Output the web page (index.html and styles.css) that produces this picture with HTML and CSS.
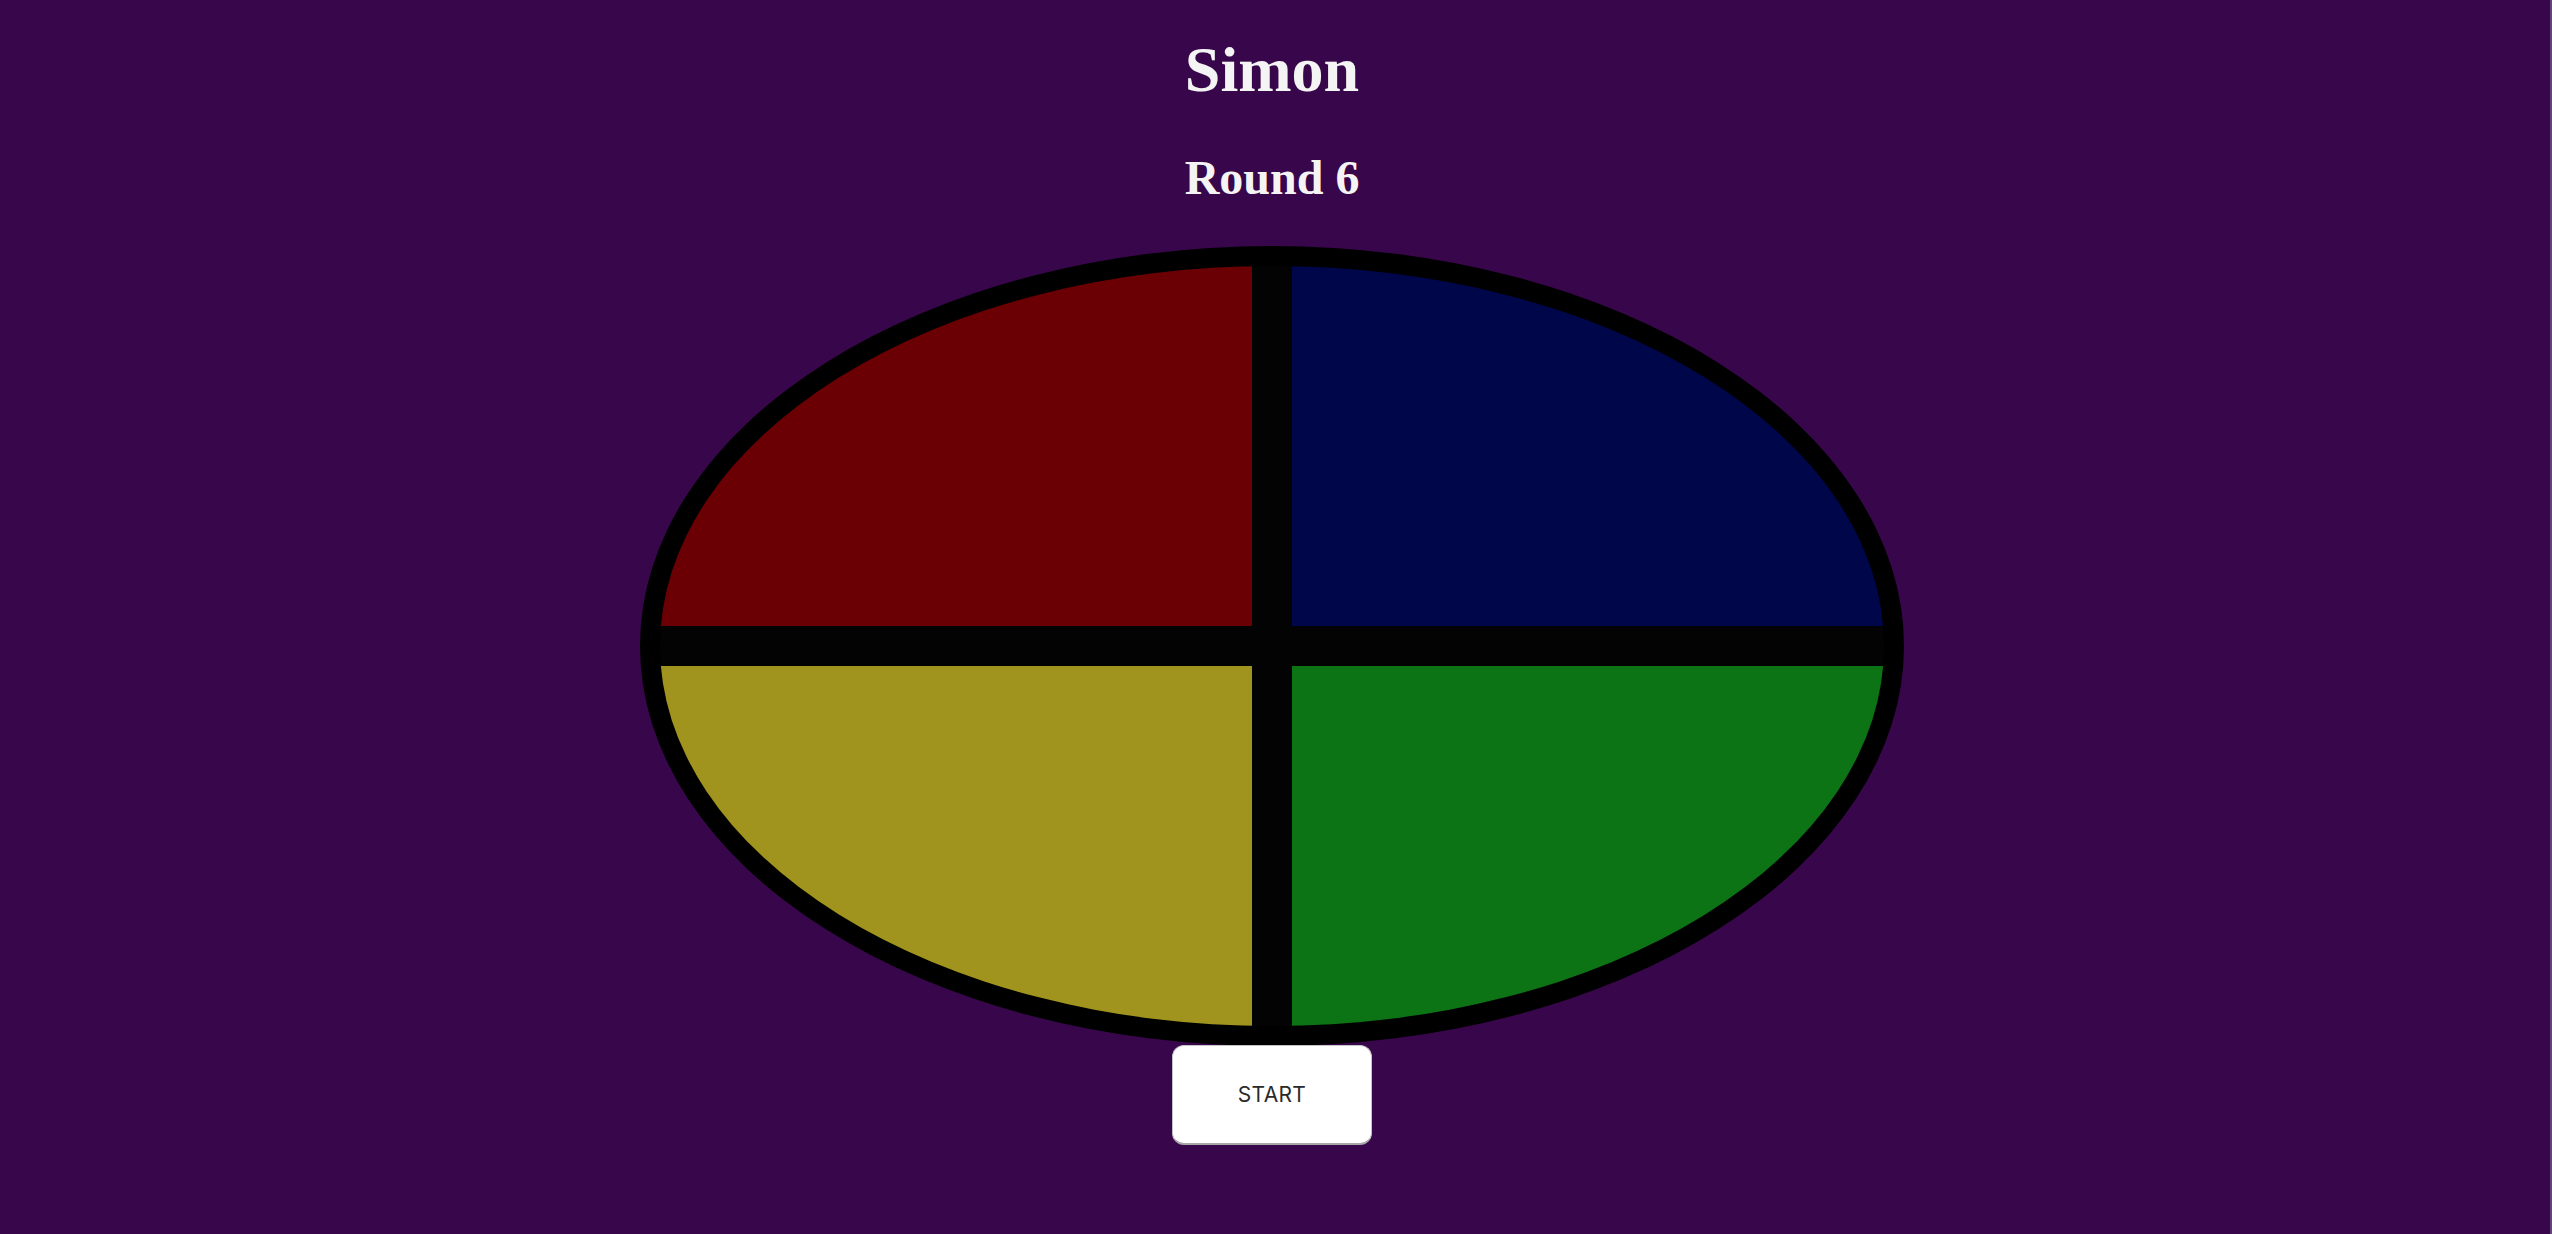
FILE: index.html
```html
<!DOCTYPE html>
<html lang="en">
<head>
<meta charset="utf-8">
<title>Simon</title>
<link rel="stylesheet" href="styles.css">
</head>
<body>
<main class="page">
  <h1 class="title">Simon</h1>
  <h2 class="round">Round 6</h2>
  <div class="board">
    <div class="pad pad-red"></div>
    <div class="pad pad-blue"></div>
    <div class="pad pad-yellow"></div>
    <div class="pad pad-green"></div>
  </div>
  <button class="start" type="button">START</button>
</main>
</body>
</html>
```

FILE: styles.css
```css
html, body {
  margin: 0;
  padding: 0;
  height: 100%;
  overflow: hidden;
}

body {
  background: #38064a;
  box-sizing: border-box;
  border-right: 2px solid #5f4579;
  padding-right: 6px;
}

.page {
  display: flex;
  flex-direction: column;
  align-items: center;
  padding-top: 33px;
  font-family: "Liberation Serif", "Times New Roman", serif;
  color: #f4f4f4;
}

.title {
  margin: 0;
  font-size: 64px;
  font-weight: bold;
}

.round {
  margin: 43px 0 0;
  font-size: 48px;
  font-weight: bold;
}

.board {
  margin-top: 41px;
  width: 1264px;
  height: 800px;
  box-sizing: border-box;
  border: 20px solid #000;
  border-radius: 50%;
  background: #030303;
  overflow: hidden;
  display: grid;
  grid-template-columns: 1fr 1fr;
  grid-template-rows: 1fr 1fr;
  gap: 40px;
}

.pad-red { background: #6a0003; }
.pad-blue { background: #00064a; }
.pad-yellow { background: #a0941e; }
.pad-green { background: #0d7416; }

.start {
  margin-top: -1px;
  width: 200px;
  height: 100px;
  background: #fff;
  border: 1px solid #c4c4c4;
  border-bottom: 2px solid #a8a8a8;
  border-radius: 12px;
  font-family: Inter, "Liberation Sans", Arial, sans-serif;
  font-size: 21px;
  color: #2a2a2a;
  letter-spacing: 0.3px;
  cursor: pointer;
}
```
